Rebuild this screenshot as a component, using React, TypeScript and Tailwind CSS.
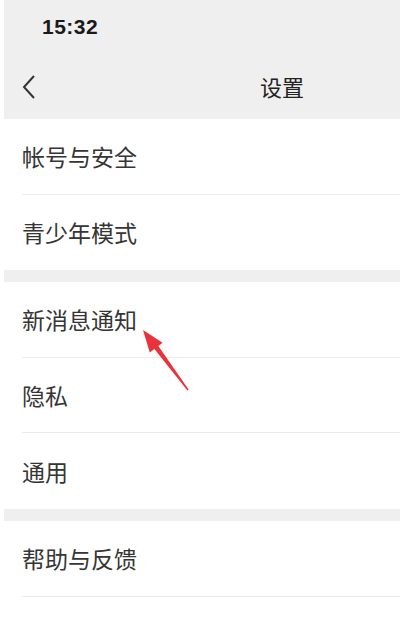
/**
 * Settings screen — WeChat-style list with a red annotation arrow.
 */

const FONT = '"Noto Sans CJK SC", "Noto Sans", sans-serif';

interface RowProps {
  label: string;
  divider?: boolean;
  tall?: boolean;
}

function Row({ label, divider = true, tall = true }: RowProps) {
  return (
    <div className={(tall ? 'h-[76px]' : 'h-[75px]') + ' pl-[22px] bg-white'}>
      <div
        className={
          'h-full flex items-center text-[23px] text-[#353535] ' +
          (divider ? 'border-b border-[#ebebeb]' : '')
        }
      >
        {label}
      </div>
    </div>
  );
}

function Gap() {
  return <div className="h-[12px] ml-[4px] bg-[#efefef]" />;
}

export default function App() {
  return (
    <div className="relative w-[400px] h-[628px] bg-white overflow-hidden" style={{ fontFamily: FONT }}>
      {/* header */}
      <div className="ml-[4px] bg-[#efefef] h-[119px] flex flex-col">
        <div className="h-[54px] flex items-center pl-[38px]">
          <span
            className="text-[21px] font-bold text-[#1a1a1a] tracking-[0.5px]"
            style={{ fontFamily: '"Liberation Sans", Arial, sans-serif' }}
          >
            15:32
          </span>
        </div>
        <div className="h-[65px] flex items-center">
          <svg width="14" height="26" viewBox="0 0 14 26" className="ml-[18px]">
            <path d="M12 2 L2 13 L12 24" fill="none" stroke="#333" strokeWidth="2" />
          </svg>
          <span className="ml-auto mr-[96px] text-[22px] text-[#222]">设置</span>
        </div>
      </div>

      <Row label="帐号与安全" />
      <Row label="青少年模式" divider={false} tall={false} />
      <Gap />
      <Row label="新消息通知" />
      <Row label="隐私" tall={false} />
      <Row label="通用" divider={false} />
      <Gap />
      <Row label="帮助与反馈" />

      {/* annotation arrow */}
      <svg className="absolute left-0 top-0 pointer-events-none" width="400" height="628" viewBox="0 0 400 628">
        <polygon points="158,345.5 154,348.5 187.4,390.5 188.6,389.5" fill="#e8333b" />
        <polygon points="143,330 162.6,342.8 149.8,352.4" fill="#e8333b" />
      </svg>
    </div>
  );
}
